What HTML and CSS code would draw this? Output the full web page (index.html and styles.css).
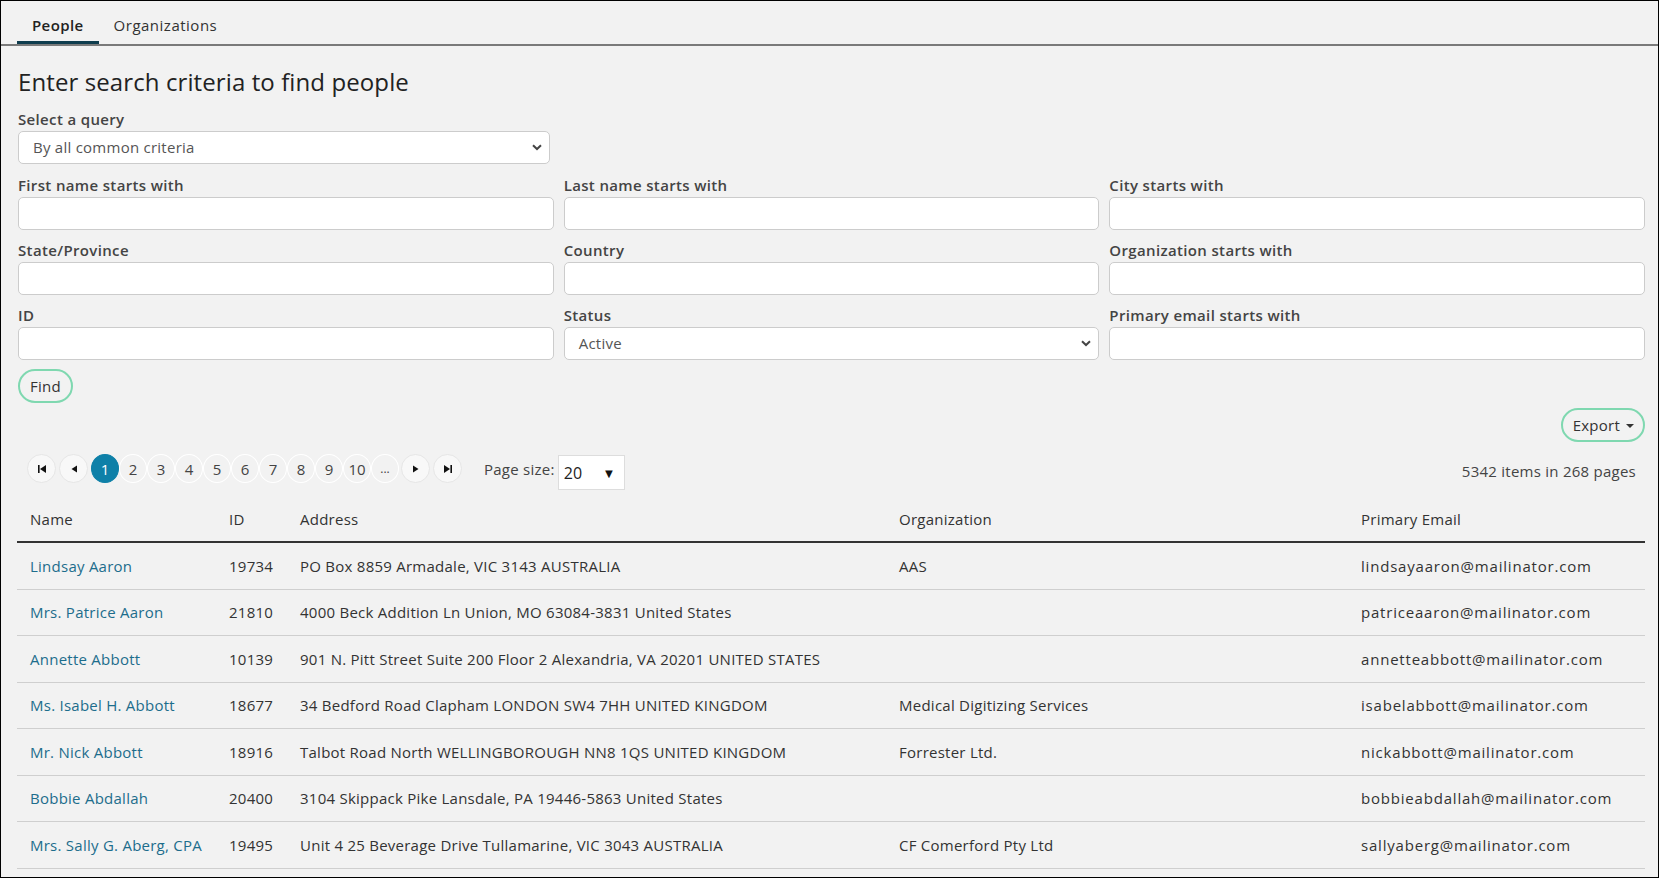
FILE: index.html
```html
<!DOCTYPE html>
<html>
<head>
<meta charset="utf-8">
<link rel="stylesheet" href="styles.css">
</head>
<body>
<div class="frame">
  <div class="tabs">
    <div class="tab active">People</div>
    <div class="tab">Organizations</div>
  </div>
  <div class="main">
    <h1 class="title">Enter search criteria to find people</h1>
    <div class="query">
      <label class="lbl">Select a query</label>
      <div class="selwrap">
        <div class="sel">By all common criteria</div>
        <svg class="chev" width="10" height="7" viewBox="0 0 10 7"><path d="M1 1.2 L5 5 L9 1.2" fill="none" stroke="#444" stroke-width="2"/></svg>
      </div>
    </div>
    <div class="grid">
      <div class="field"><label class="lbl">First name starts with</label><div class="inp"></div></div>
      <div class="field"><label class="lbl">Last name starts with</label><div class="inp"></div></div>
      <div class="field"><label class="lbl">City starts with</label><div class="inp"></div></div>
      <div class="field"><label class="lbl">State/Province</label><div class="inp"></div></div>
      <div class="field"><label class="lbl">Country</label><div class="inp"></div></div>
      <div class="field"><label class="lbl">Organization starts with</label><div class="inp"></div></div>
      <div class="field"><label class="lbl">ID</label><div class="inp"></div></div>
      <div class="field"><label class="lbl">Status</label>
        <div class="selwrap">
          <div class="sel">Active</div>
          <svg class="chev" width="10" height="7" viewBox="0 0 10 7"><path d="M1 1.2 L5 5 L9 1.2" fill="none" stroke="#444" stroke-width="2"/></svg>
        </div>
      </div>
      <div class="field"><label class="lbl">Primary email starts with</label><div class="inp"></div></div>
    </div>
    <div class="findrow"><button class="pill">Find</button></div>
    <div class="exportrow"><button class="pill export">Export <span class="caret"></span></button></div>
    <div class="pager">
      <div class="pages">
        <span class="pb arrow"><svg width="10" height="10" viewBox="0 0 10 10"><rect x="1" y="1" width="1.6" height="8" fill="#111"/><path d="M9 1 L9 9 L3 5 Z" fill="#111"/></svg></span>
        <span class="pb arrow"><svg width="10" height="10" viewBox="0 0 10 10"><path d="M8 1.5 L8 8.5 L2.5 5 Z" fill="#111"/></svg></span>
        <span class="pb num cur">1</span>
        <span class="pb num">2</span>
        <span class="pb num">3</span>
        <span class="pb num">4</span>
        <span class="pb num">5</span>
        <span class="pb num">6</span>
        <span class="pb num">7</span>
        <span class="pb num">8</span>
        <span class="pb num">9</span>
        <span class="pb num">10</span>
        <span class="pb num dots">...</span>
        <span class="pb arrow"><svg width="10" height="10" viewBox="0 0 10 10"><path d="M2 1.5 L2 8.5 L7.5 5 Z" fill="#111"/></svg></span>
        <span class="pb arrow"><svg width="10" height="10" viewBox="0 0 10 10"><path d="M1 1 L1 9 L7 5 Z" fill="#111"/><rect x="7.4" y="1" width="1.6" height="8" fill="#111"/></svg></span>
        <span class="psize">Page size:</span>
        <span class="psel">20<span class="tri">&#9660;</span></span>
      </div>
      <div class="count">5342 items in 268 pages</div>
    </div>
    <table class="tbl">
      <colgroup>
        <col class="c1"><col class="c2"><col class="c3"><col class="c4"><col class="c5">
      </colgroup>
      <thead>
        <tr><th>Name</th><th>ID</th><th>Address</th><th>Organization</th><th>Primary Email</th></tr>
      </thead>
      <tbody>
        <tr><td><a>Lindsay Aaron</a></td><td>19734</td><td>PO Box 8859 Armadale, VIC 3143 AUSTRALIA</td><td>AAS</td><td class="em">lindsayaaron@mailinator.com</td></tr>
        <tr><td><a>Mrs. Patrice Aaron</a></td><td>21810</td><td>4000 Beck Addition Ln Union, MO 63084-3831 United States</td><td></td><td class="em">patriceaaron@mailinator.com</td></tr>
        <tr><td><a>Annette Abbott</a></td><td>10139</td><td>901 N. Pitt Street Suite 200 Floor 2 Alexandria, VA 20201 UNITED STATES</td><td></td><td class="em">annetteabbott@mailinator.com</td></tr>
        <tr><td><a>Ms. Isabel H. Abbott</a></td><td>18677</td><td>34 Bedford Road Clapham LONDON SW4 7HH UNITED KINGDOM</td><td>Medical Digitizing Services</td><td class="em">isabelabbott@mailinator.com</td></tr>
        <tr><td><a>Mr. Nick Abbott</a></td><td>18916</td><td>Talbot Road North WELLINGBOROUGH NN8 1QS UNITED KINGDOM</td><td>Forrester Ltd.</td><td class="em">nickabbott@mailinator.com</td></tr>
        <tr><td><a>Bobbie Abdallah</a></td><td>20400</td><td>3104 Skippack Pike Lansdale, PA 19446-5863 United States</td><td></td><td class="em">bobbieabdallah@mailinator.com</td></tr>
        <tr><td><a>Mrs. Sally G. Aberg, CPA</a></td><td>19495</td><td>Unit 4 25 Beverage Drive Tullamarine, VIC 3043 AUSTRALIA</td><td>CF Comerford Pty Ltd</td><td class="em">sallyaberg@mailinator.com</td></tr>
      </tbody>
    </table>
  </div>
</div>
</body>
</html>
```

FILE: styles.css
```css
html, body {
  margin: 0;
  padding: 0;
}
body {
  font-family: "Open Sans", "Liberation Sans", sans-serif;
  font-size: 15px;
  letter-spacing: 0.25px;
  color: #333;
}
.frame {
  width: 1659px;
  height: 878px;
  box-sizing: border-box;
  border: 1px solid #000;
  background: #f2f2f2;
  overflow: hidden;
}
.tabs {
  display: flex;
  padding-left: 16px;
  border-bottom: 2px solid #7a7a7a;
}
.tab {
  padding: 14px 15px 6px 15px;
  line-height: 20px;
  border-bottom: 3px solid transparent;
  color: #333;
  font-size: 15px;
  letter-spacing: 0.5px;
}
.tab.active {
  font-weight: 600;
  color: #222;
  letter-spacing: 0.4px;
  border-bottom-color: #0f3d4e;
}
.main {
  padding: 0 13px 0 17px;
}
.title {
  margin: 21px 0 0 0;
  font-size: 24px;
  line-height: 30px;
  font-weight: 400;
  letter-spacing: 0.1px;
  color: #222;
}
.lbl {
  display: block;
  font-weight: 600;
  line-height: 20px;
  color: #444;
  letter-spacing: 0.35px;
  margin-bottom: 2px;
}
.query {
  margin-top: 12px;
}
.query .selwrap {
  width: 532px;
}
.selwrap {
  position: relative;
}
.sel {
  height: 33px;
  box-sizing: border-box;
  border: 1px solid #ccc;
  border-radius: 5px;
  background: #fff;
  padding: 0 14px;
  line-height: 31px;
  color: #555;
}
.chev {
  position: absolute;
  right: 8px;
  top: 13px;
}
.grid {
  display: grid;
  grid-template-columns: repeat(3, 1fr);
  column-gap: 10px;
  row-gap: 10px;
  margin-top: 11px;
}
.inp {
  height: 33px;
  box-sizing: border-box;
  border: 1px solid #ccc;
  border-radius: 5px;
  background: #fff;
}
.findrow {
  margin-top: 9px;
}
.pill {
  font-family: inherit;
  font-size: 15px;
  letter-spacing: 0.25px;
  color: #333;
  background: transparent;
  border: 2px solid #7fd8b0;
  border-radius: 17px;
  height: 34px;
  padding: 0 10px;
  line-height: 30px;
  cursor: pointer;
}
.exportrow {
  display: flex;
  justify-content: flex-end;
  margin-top: 5px;
}
.export {
  padding: 0 9px 0 10px;
  display: flex;
  align-items: center;
  gap: 6px;
}
.caret {
  width: 0;
  height: 0;
  border-left: 4px solid transparent;
  border-right: 4px solid transparent;
  border-top: 4px solid #333;
  margin-top: 1px;
}
.pager {
  display: flex;
  align-items: flex-start;
  justify-content: space-between;
  height: 36px;
  margin-top: 12px;
  padding: 0 9px;
}
.pages {
  display: flex;
  align-items: flex-start;
}
.pb {
  box-sizing: border-box;
  height: 29px;
  border-radius: 50%;
  display: flex;
  align-items: center;
  justify-content: center;
  color: #444;
  font-size: 15px;
  letter-spacing: 0;
}
.arrow {
  width: 29px;
  background: #f8f8f8;
  border: 1px solid #e6e6e6;
  margin-right: 3px;
}
.num {
  width: 28px;
  border: 1px solid #fff;
}
.num.dots {
  margin-right: 2px;
  font-size: 12px;
}
.num.cur {
  background: #0e80a8;
  border-color: #0e80a8;
  color: #fff;
}
.psize {
  margin-left: 19px;
  margin-top: 5px;
  line-height: 20px;
  color: #444;
}
.psel {
  margin-left: 3px;
  margin-top: 1px;
  width: 67px;
  height: 35px;
  box-sizing: border-box;
  background: #fff;
  border: 1px solid #ddd;
  display: flex;
  align-items: center;
  justify-content: space-between;
  padding: 0 8px 0 5px;
  font-size: 16px;
  color: #222;
}
.tri {
  font-size: 13px;
  color: #111;
}
.count {
  color: #444;
  margin-top: 7px;
  line-height: 20px;
}
.tbl {
  width: 1628px;
  border-collapse: collapse;
  table-layout: fixed;
  margin-top: 6px;
  margin-left: -1px;
}
.c1 { width: 199px; }
.c2 { width: 71px; }
.c3 { width: 599px; }
.c4 { width: 462px; }
.c5 { width: 297px; }
.tbl th {
  text-align: left;
  font-weight: 400;
  color: #333;
  padding: 12.5px 13px;
  line-height: 20px;
  border-bottom: 2px solid #333;
}
.tbl td {
  padding: 12.75px 13px;
  line-height: 20px;
  border-bottom: 1px solid #cfcfcf;
  color: #333;
  white-space: nowrap;
}
.tbl td.em {
  letter-spacing: 0.8px;
}
.tbl a {
  color: #1d6d8c;
  text-decoration: none;
}
```
